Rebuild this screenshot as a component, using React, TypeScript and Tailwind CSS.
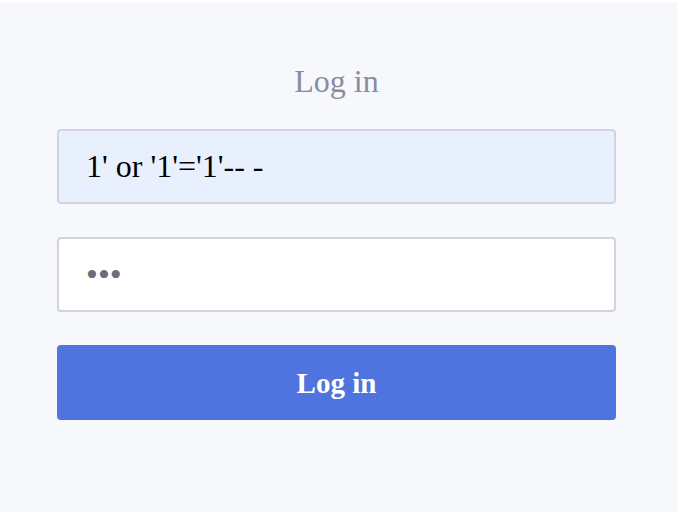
export default function App() {
  return (
    <div className="w-[681px] h-[518px] bg-white pt-[2px]">
      <div
        className="w-[677px] h-[510px] bg-[#f7f8fc] flex flex-col pl-[57px] pr-[61px] pt-[61px]"
        style={{ fontFamily: '"Liberation Serif", "Times New Roman", serif' }}
      >
        <h1 className="text-center text-[32px] leading-[36px] text-[#8a8c9e] font-normal">Log in</h1>
        <form className="mt-[30px] w-full flex flex-col gap-[33px]" onSubmit={(e) => e.preventDefault()}>
          <input
            type="text"
            readOnly
            defaultValue="1' or '1'='1'-- -"
            className="h-[75px] w-full rounded-[4px] border-2 border-[#d1d3e2] bg-[#e8f0fe] px-[27px] font-serif text-[32px] text-black outline-none"
            style={{ fontFamily: '"Liberation Serif", serif' }}
          />
          <input
            type="password"
            readOnly
            defaultValue="abc"
            className="h-[75px] w-full rounded-[4px] border-2 border-[#d1d3e2] bg-white px-[27px] text-[34px] text-[#6b6d7e] outline-none"
            style={{ fontFamily: '"Liberation Serif", serif' }}
          />
          <button
            type="submit"
            className="h-[75px] w-full rounded-[4px] bg-[#4f74df] pt-[2px] text-[29px] font-bold text-white"
          >
            Log in
          </button>
        </form>
      </div>
    </div>
  );
}
